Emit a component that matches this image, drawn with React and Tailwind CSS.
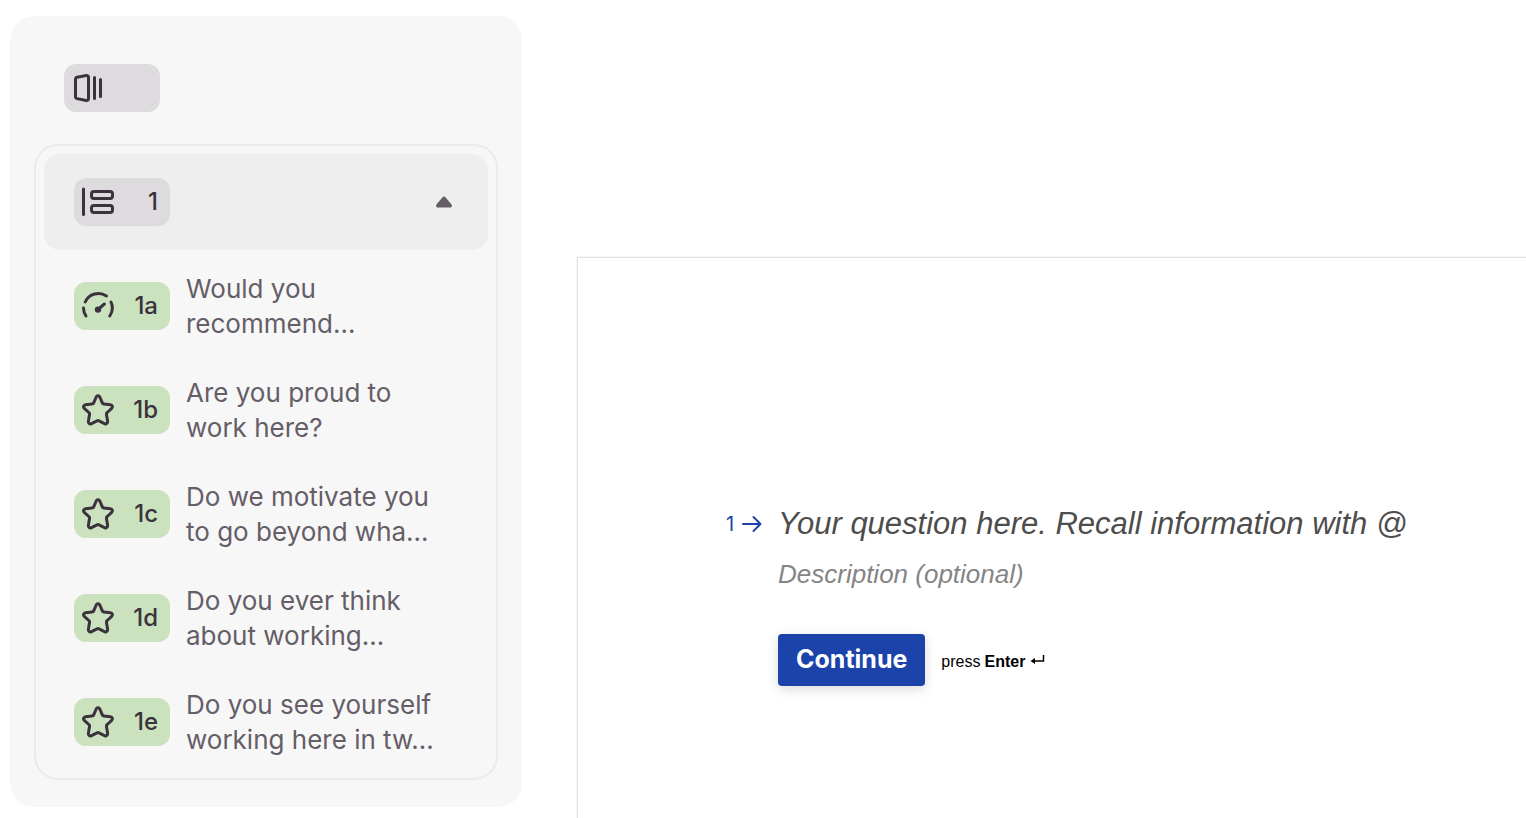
import { useState } from "react"

const questions = [
  { id: "1a", type: "scale", title: "Would you recommend…" },
  { id: "1b", type: "rating", title: "Are you proud to work here?" },
  { id: "1c", type: "rating", title: "Do we motivate you to go beyond wha…" },
  { id: "1d", type: "rating", title: "Do you ever think about working…" },
  { id: "1e", type: "rating", title: "Do you see yourself working here in tw…" },
]

function Icon({ children }) {
  return (
    <svg
      className="w-8 h-8 shrink-0"
      viewBox="0 0 32 32"
      fill="none"
      stroke="currentColor"
      strokeWidth="3"
      strokeLinecap="round"
      strokeLinejoin="round"
      aria-hidden="true"
    >
      {children}
    </svg>
  )
}

function WelcomeIcon() {
  return (
    <Icon>
      <path d="M5 5.2 14.4 3.5c1.2-.2 2.1.5 2.1 1.7v21.6c0 1.2-.9 1.9-2.1 1.7L5 26.6c-.9-.2-1.5-.8-1.5-1.7V6.9c0-.9.6-1.5 1.5-1.7z" />
      <path d="M22.5 5.5v21M28.5 7.5v17" />
    </Icon>
  )
}

function GroupIcon() {
  return (
    <Icon>
      <path d="M1.5 3v25.5" />
      <rect x="9.5" y="5.5" width="21" height="7" rx="2.5" />
      <rect x="9.5" y="19.5" width="21" height="7" rx="2.5" />
    </Icon>
  )
}

function ScaleIcon() {
  return (
    <Icon>
      <path d="M3.2 12A14.5 14.5 0 0 1 24.5 6" />
      <path d="M1.5 18a14.5 14.5 0 0 0 2.5 8" />
      <path d="M29 12a14.5 14.5 0 0 1-1.2 14" />
      <path d="M22.4 14 16.5 19" />
      <circle cx="16" cy="19.6" r="3.2" fill="currentColor" stroke="none" />
    </Icon>
  )
}

function StarIcon() {
  return (
    <Icon>
      <path d="M14.2 3c.7-1.7 2.9-1.7 3.6 0l2.4 5.6c.3.8 1 1.3 1.8 1.4l6.4.7c1.9.2 2.7 2.3 1.3 3.6l-4.5 4.2c-.6.5-.9 1.3-.7 2.1l1.1 6.7c.3 1.9-1.5 3.2-3.1 2.3L17 26.8c-.6-.3-1.4-.3-2 0l-5.5 2.8c-1.6.9-3.4-.4-3.1-2.3l1.1-6.7c.2-.8-.1-1.6-.7-2.1l-4.5-4.2c-1.4-1.3-.6-3.4 1.3-3.6l6.4-.7c.8-.1 1.5-.6 1.8-1.4z" />
    </Icon>
  )
}

export default function App() {
  const [open, setOpen] = useState(true)

  return (
    <div className="min-h-screen bg-white flex items-stretch overflow-hidden font-['Inter',sans-serif]">
      {/* Sidebar */}
      <aside className="w-128 shrink-0 self-start ml-2.5 mt-4 px-6 pt-12 pb-[27px] rounded-3xl bg-[#f7f7f7] text-[#3c323e]">
        <button
          type="button"
          aria-label="Welcome screen"
          className="w-24 h-12 ml-7.5 px-2 flex items-center rounded-xl bg-[#dedbdf]"
        >
          <WelcomeIcon />
        </button>

        {/* Question group */}
        <div className="mt-8 px-2 pt-2 pb-1 border-2 border-[#ebebeb] rounded-3xl">
          <button
            type="button"
            aria-expanded={open}
            onClick={() => setOpen(!open)}
            className="w-full h-24 pl-7.5 pr-9 flex items-center justify-between rounded-2xl bg-[#eeeeee]"
          >
            <span className="w-24 h-12 pl-2 pr-3 flex items-center justify-between rounded-xl bg-[#dedbdf] text-2xl font-medium">
              <GroupIcon />1
            </span>
            <svg className="w-4 h-3 text-[#655d67]" viewBox="0 0 16 12" fill="currentColor" aria-hidden="true">
              <path d="M6.8 1.1c.7-.7 1.7-.7 2.4 0l6.2 7.2c1 1.2.4 3.2-1.2 3.2H1.800C.2 11.5-.4 9.5.6 8.3z" />
            </svg>
          </button>

          {open && (
            <ul className="mt-1">
              {questions.map((q) => (
                <li key={q.id}>
                  <button type="button" className="w-full h-26 pl-7.5 pr-12 flex items-center gap-4 text-left">
                    <span className="w-24 h-12 shrink-0 pl-2 pr-3 flex items-center justify-between rounded-xl bg-[#cbe2be] text-2xl font-medium">
                      {q.type === "scale" ? <ScaleIcon /> : <StarIcon />}
                      {q.id}
                    </span>
                    <span className="flex-1 text-[26px] leading-[35px] text-[#655d67]">{q.title}</span>
                  </button>
                </li>
              ))}
            </ul>
          )}
        </div>
      </aside>

      {/* Preview */}
      <main className="flex-1 min-w-0 ml-[55px] mt-[257px] pt-[242px] pl-37 pr-8 border-t border-l border-[#e2e2e2] shadow-[0_0_2px_rgba(0,0,0,0.12)]">
        <div className="flex gap-4">
          <div className="w-9 h-12 shrink-0 flex items-center justify-between text-xl text-[#1c43aa]">
            1
            <svg
              className="w-5 h-5"
              viewBox="0 0 20 20"
              fill="none"
              stroke="currentColor"
              strokeWidth="2"
              strokeLinecap="round"
              strokeLinejoin="round"
              aria-hidden="true"
            >
              <path d="M1 10h17.5M11.5 3l7 7-7 7" />
            </svg>
          </div>
          <div className="flex-1 min-w-0">
            <input
              type="text"
              aria-label="Question"
              placeholder="Your question here. Recall information with @"
              className="block w-full h-12 text-[31px] italic outline-none placeholder:text-[#4d4d4d] font-['Liberation_Sans',sans-serif]"
            />
            <input
              type="text"
              aria-label="Description"
              placeholder="Description (optional)"
              className="block w-full h-12 mt-0.5 text-[26px] italic outline-none placeholder:text-[#858585] font-['Liberation_Sans',sans-serif]"
            />
            <div className="mt-9 flex items-center gap-4">
              <button
                type="button"
                className="h-13 px-4.5 rounded bg-[#1c43aa] text-white text-[25px] font-bold shadow-[0_3px_12px_rgba(0,0,0,0.15)]"
              >
                Continue
              </button>
              <p className="pt-1 flex items-center gap-1 text-base text-black font-['Liberation_Sans',sans-serif]">
                press <strong>Enter</strong>
                <svg className="w-4 h-4" viewBox="0 0 16 16" fill="none" stroke="currentColor" strokeWidth="1.5" aria-hidden="true">
                  <path d="M14.5 1v6H3" />
                  <path d="M1.5 7 6 4v6z" fill="currentColor" stroke="none" />
                </svg>
              </p>
            </div>
          </div>
        </div>
      </main>
    </div>
  )
}
